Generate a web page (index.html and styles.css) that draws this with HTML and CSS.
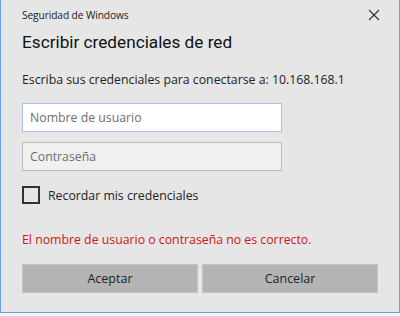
FILE: index.html
```html
<!DOCTYPE html>
<html lang="es">
<head>
  <meta charset="UTF-8">
  <title>Seguridad de Windows</title>
  <link rel="stylesheet" href="styles.css">
</head>
<body>

  <!-- Credential dialog -->
  <div class="dialog">
    <div class="titlebar">
      <span class="app-name">Seguridad de Windows</span>
      <svg class="close" width="12" height="12" viewBox="0 0 12 12">
        <path d="M1 1 L11 11 M11 1 L1 11" stroke="#333" stroke-width="1.1" fill="none"/>
      </svg>
    </div>

    <h1>Escribir credenciales de red</h1>
    <p class="intro">Escriba sus credenciales para conectarse a: 10.168.168.1</p>

    <form class="cred-form">
      <input type="text" class="field focused" placeholder="Nombre de usuario">
      <input type="password" class="field" placeholder="Contraseña">
      <label class="remember">
        <span class="box"></span>
        Recordar mis credenciales
      </label>
      <p class="error">El nombre de usuario o contraseña no es correcto.</p>
      <div class="actions">
        <button type="submit">Aceptar</button>
        <button type="button">Cancelar</button>
      </div>
    </form>
  </div>

</body>
</html>
```

FILE: styles.css
```css
body {
  margin: 0;
  padding: 0;
  background: #f4f4f4;
  font-family: "Open Sans", "Noto Sans", sans-serif;
}

.dialog {
  width: 400px;
  height: 313px;
  background: #e6e6e6;
  border-left: 1px solid #6d9ee8;
  border-right: 1px solid #6d9ee8;
  border-bottom: 1px solid #6d9ee8;
  padding: 0 21px;
  box-sizing: border-box;
}

/* Title bar */
.titlebar {
  display: flex;
  justify-content: space-between;
  align-items: center;
  height: 29px;
}

.app-name {
  font-size: 10.2px;
  color: #222;
  letter-spacing: -0.1px;
}

.close {
  margin-right: -2px;
}

h1 {
  font-family: Roboto, "Open Sans", sans-serif;
  font-size: 17.2px;
  font-weight: normal;
  color: #111;
  margin: 0;
  line-height: 27px;
}

.intro {
  font-size: 12.3px;
  color: #222;
  margin: 16px 0 0;
  line-height: 16px;
}

.cred-form {
  display: flex;
  flex-direction: column;
  align-items: flex-start;
}

.field {
  width: 260px;
  height: 29px;
  box-sizing: border-box;
  border: 1px solid #bdbdbd;
  background: #f0f0f0;
  font-family: inherit;
  font-size: 12.3px;
  padding: 0 7px;
  margin: 0;
  outline: none;
}

.field::placeholder {
  color: #6e6e6e;
}

.field.focused {
  margin-top: 15px;
  background: #fff;
  border-color: #a9c0ee;
}

.field + .field {
  margin-top: 10px;
}

.remember {
  display: flex;
  align-items: center;
  gap: 8px;
  margin-top: 15px;
  font-size: 12.3px;
  color: #222;
}

.box {
  width: 14px;
  height: 14px;
  border: 2px solid #333;
}

.error {
  color: #d21414;
  font-size: 12.3px;
  margin: 28px 0 0;
  line-height: 16px;
}

.actions {
  display: flex;
  gap: 4px;
  margin-top: 16px;
  width: 356px;
}

button {
  flex: 1;
  height: 29px;
  background: #b4b4b4;
  border: 1px solid #c4c4c4;
  font-family: inherit;
  font-size: 12.5px;
  color: #222;
  cursor: pointer;
}
```
